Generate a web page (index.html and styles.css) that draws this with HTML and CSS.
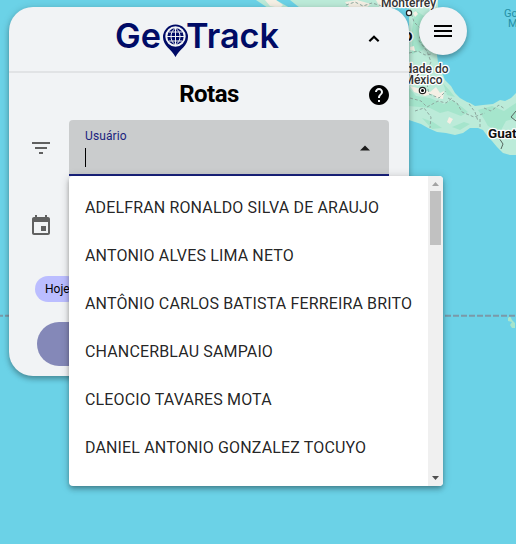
FILE: index.html
```html
<!DOCTYPE html>
<html lang="pt-BR">
<head>
<meta charset="utf-8">
<title>GeoTrack</title>
<link rel="stylesheet" href="styles.css">
</head>
<body>
<svg class="map" viewBox="0 0 516 544" width="516" height="544">
  <path fill="#bcebd9" d="M256 0 262 4 268 8H409V120L421 124 428 128 437 132 446 133 455 135 463 133 470 128 478 128 483 130 488 137 492 141 497 147 503 153 510 155H516V93L511 98 505 101 500 100 493 104 483 105 475 106 470 103 467 102 460 98 455 93 451 86 445 80 443 75 439 70 438 62 437 55 438 40V0Z"/>
  <path fill="#6bd2e7" d="M276 0 283 4 290 8H300L290 0Z"/>
  <path fill="#a5e5cc" d="M415 10 424 16 420 28 428 40 423 50 412 54V30ZM409 88 416 96 430 98 444 104 452 100 462 107 468 112 461 116 448 111 440 113 430 108 409 106ZM478 110 492 106 504 111 516 103V118L506 121 500 132 488 126 484 119ZM422 118 433 122 442 128 432 129ZM443 83 450 91 455 97 447 95ZM452 127 464 122 470 124 460 130Z"/>
  <path fill="#f5f0e5" d="M265 0H276L283 5 280 8 270 6ZM345 2 357 0 371 4 366 8H350ZM413 13 416 11 418 14 415 17ZM410 47 414 46 415 51 410 50ZM410 86 421 89 430 92 436 87 440 93 444 91 443 99 436 98 432 94 425 96 414 92ZM449 117 453 119 450 124 447 122ZM376 0 386 0 390 6 380 8Z"/>
  <g class="borders">
    <path d="M346 5 355 2 363 6 372 3 382 6M410 9 414 22 421 29 419 41 427 51 431 62 427 70M409 53 418 51 425 55 432 54M410 98 421 101 427 107 438 101 446 103 452 98M415 111 424 108 431 117 430 128M427 84 429 94 439 98 446 91M448 98 457 103 462 112 474 117 485 113M469 104 475 112 478 121M484 108 491 111 499 105 505 109M480 119 480 128"/>
    <path class="frontier" d="M516 111 511 117 516 121M499 138 503 144 501 149"/>
  </g>
  <path fill="#a5e5cc" d="M510 316 512 320 515 323V328H512L510 325 512 322 508 321 508 318Z"/>
  <path class="tropic" d="M-3 315.8H9M445 315.8H516"/>
  <circle class="city" cx="409" cy="13" r="2.6"/>
  <circle class="city" cx="422.500" cy="90.500" r="3.200"/>
  <circle cx="422.500" cy="90.500" r="1.500"/>
  <g class="map-labels">
    <text x="381" y="7">Monterrey</text>
    <text x="448.500" y="72.500" text-anchor="end">Cidade do</text>
    <text x="442.500" y="84.300" text-anchor="end">México</text>
    <text class="country" x="412.500" y="41" text-anchor="end">México</text>
    <text class="country guat" x="488" y="138">Guat</text>
    <g class="sea"><text x="504" y="17">Go</text><text x="508" y="27">M</text></g>
  </g>
</svg>

<main class="panel">
  <header class="brand">
    <svg class="logo" viewBox="0 0 166 44" width="166" height="44" role="img" aria-label="GeoTrack">
      <text x="0" y="33" textLength="46" lengthAdjust="spacingAndGlyphs">Ge</text>
      <path d="M60.500 9.500A12.500 12.500 0 0 0 48 22C48 31 56.500 34 60.500 42 64.500 34 73 31 73 22A12.500 12.500 0 0 0 60.500 9.500Z"/>
      <circle cx="60.500" cy="21.500" r="9.200" fill="none" stroke="#f1f3f5" stroke-width="2"/>
      <path fill="none" stroke="#f1f3f5" stroke-width="1" d="M60.500 13V30M52 21.500H69M54 17H67M54 26H67M60.500 13C54.500 17 54.500 26 60.500 30 66.500 26 66.500 17 60.500 13"/>
      <text x="71" y="33" textLength="93" lengthAdjust="spacingAndGlyphs">Track</text>
    </svg>
    <svg class="chevron" viewBox="0 0 24 24" width="24" height="24"><path d="M12 8.200 6.600 13.600 8.100 15.100 12 11.200 15.900 15.100 17.400 13.600Z"/></svg>
  </header>
  <div class="title-row">
    <h1>Rotas</h1>
    <svg class="help" viewBox="0 0 24 24" width="24" height="24"><path d="M12 2C6.480 2 2 6.480 2 12s4.480 10 10 10 10-4.480 10-10S17.520 2 12 2zm1 17h-2v-2h2v2zm2.070-7.750l-.9.920C13.450 12.900 13 13.500 13 15h-2v-.5c0-1.100.45-2.100 1.170-2.830l1.240-1.260c.37-.36.59-.86.59-1.410 0-1.100-.9-2-2-2s-2 .9-2 2H8c0-2.210 1.790-4 4-4s4 1.790 4 4c0 .88-.36 1.680-.93 2.250z"/></svg>
  </div>
  <div class="field-row">
    <svg class="row-icon" viewBox="0 0 24 24" width="24" height="24"><path d="M10 18h4v-2h-4v2zM3 6v2h18V6H3zm3 7h12v-2H6v2z"/></svg>
    <div class="select">
      <div class="select-text"><label>Usuário</label><span class="caret"></span></div>
      <svg viewBox="0 0 24 24" width="24" height="24"><path d="M7 14.500 12 9.500 17 14.500Z"/></svg>
    </div>
  </div>
  <div class="date-row">
    <svg class="row-icon" viewBox="0 0 24 24" width="24" height="24"><path d="M17 12h-5v5h5v-5zM16 1v2H8V1H6v2H5c-1.110 0-1.990.9-1.990 2L3 19c0 1.100.89 2 2 2h14c1.100 0 2-.9 2-2V5c0-1.100-.9-2-2-2h-1V1h-2zm3 18H5V8h14v11z"/></svg>
  </div>
  <div class="chips"><span class="chip">Hoje</span></div>
  <div class="submit"></div>
</main>

<div class="menu-button"><svg viewBox="0 0 24 24" width="24" height="24"><path d="M3 18h18v-2H3v2zm0-5h18v-2H3v2zm0-7v2h18V6H3z"/></svg></div>

<div class="dropdown">
  <ul class="options">
    <li>ADELFRAN RONALDO SILVA DE ARAUJO</li>
    <li>ANTONIO ALVES LIMA NETO</li>
    <li>ANTÔNIO CARLOS BATISTA FERREIRA BRITO</li>
    <li>CHANCERBLAU SAMPAIO</li>
    <li>CLEOCIO TAVARES MOTA</li>
    <li>DANIEL ANTONIO GONZALEZ TOCUYO</li>
  </ul>
  <div class="scrollbar">
    <svg viewBox="0 0 15 15" width="15" height="15"><path fill="#a3a3a3" d="M4 10 7.500 6 11 10Z"/></svg>
    <div class="thumb"></div>
    <svg class="down" viewBox="0 0 15 15" width="15" height="15"><path fill="#505050" d="M4 5 7.500 9 11 5Z"/></svg>
  </div>
</div>
</body>
</html>
```
FILE: styles.css
```css
* { box-sizing: border-box; }
body {
  margin: 0;
  width: 516px;
  height: 544px;
  overflow: hidden;
  position: relative;
  background: #6bd2e7;
  font-family: Roboto, sans-serif;
  color: #000;
}
svg { display: block; flex: none; }
.map { position: absolute; left: 0; top: 0; }
.borders path { fill: none; stroke: #8fa9a0; stroke-width: 1; stroke-dasharray: 3 2; }
.borders .frontier { stroke: #56665f; stroke-dasharray: none; }
.tropic { stroke: #7b99a8; stroke-width: 2; stroke-dasharray: 6 2; }
.city { fill: #fff; stroke: #222; stroke-width: 1.2; }
.map-labels text {
  font-size: 12px;
  font-weight: 500;
  fill: #333;
  stroke: #fff;
  stroke-width: 2.5px;
  paint-order: stroke;
  stroke-linejoin: round;
}
.map-labels .country { font-size: 17px; font-weight: 700; fill: #111; }
.map-labels .guat { font-size: 13.5px; }
.map-labels .sea text { font-size: 11px; font-weight: 400; fill: #238fa5; stroke: none; }

.panel {
  position: relative;
  margin: 7px 0 0 9px;
  width: 400px;
  height: 369px;
  display: inline-flex;
  flex-direction: column;
  background: #f1f3f5;
  border-radius: 24px;
  box-shadow: 0 3px 5px rgba(0,0,0,.25), 0 1px 9px rgba(0,0,0,.15);
}
.brand {
  display: flex;
  align-items: center;
  height: 66px;
  padding: 0 23px 0 106px;
  border-bottom: 2px solid #e1e3e5;
}
.logo { margin-bottom: 5px; }
.logo text { font: 600 34px Inter, sans-serif; fill: #000b66; }
.logo > path:first-of-type { fill: #000b66; }
.chevron { margin-left: auto; }
.title-row {
  display: grid;
  grid-template-columns: 24px 1fr 24px;
  align-items: center;
  height: 47px;
  padding: 0 18px;
}
.title-row h1 {
  grid-column: 2;
  margin: -5px 0 0;
  text-align: center;
  font-size: 24px;
  font-weight: 700;
  letter-spacing: -.5px;
}
.title-row .help { margin-top: -3px; }
.field-row { display: flex; align-items: center; gap: 16px; padding-left: 20px; }
.row-icon { fill: #606060; }
.select {
  display: flex;
  align-items: center;
  width: 320px;
  height: 56px;
  padding: 2px 12px 0 16px;
  background: #cacccd;
  border-bottom: 2px solid #1a237e;
  border-radius: 4px 4px 0 0;
}
.select-text { flex: 1; display: flex; flex-direction: column; gap: 5px; }
.select label { font-size: 12px; line-height: 14px; color: #1a237e; letter-spacing: .1px; }
.caret { width: 1px; height: 19px; background: #000; }
.select svg { fill: #1c1c1c; }
.date-row { padding: 38px 0 0 20px; }
.chips { padding: 38px 0 0 26px; display: flex; }
.chip {
  height: 26px;
  line-height: 26px;
  padding: 0 10px;
  border-radius: 13px;
  background: #bbbdff;
  font-size: 12px;
}
.submit {
  width: 344px;
  height: 44px;
  margin: 20px 0 0 28px;
  border-radius: 22px;
  background: #8488b8;
}
.menu-button {
  position: absolute;
  left: 419px;
  top: 7px;
  width: 48px;
  height: 48px;
  display: grid;
  place-items: center;
  border-radius: 50%;
  background: #f1f3f5;
  box-shadow: 0 3px 5px rgba(0,0,0,.25), 0 1px 9px rgba(0,0,0,.12);
}
.dropdown {
  position: absolute;
  left: 69px;
  top: 176px;
  width: 374px;
  height: 310px;
  display: flex;
  overflow: hidden;
  background: #fff;
  border-radius: 4px;
  box-shadow: 0 2px 4px -1px rgba(0,0,0,.2), 0 4px 5px rgba(0,0,0,.14), 0 1px 10px rgba(0,0,0,.2);
}
.options { flex: 1; margin: 0; padding: 8px 0 0 16px; list-style: none; }
.options li {
  height: 48px;
  line-height: 48px;
  font-size: 16px;
  letter-spacing: .144px;
  color: rgba(0,0,0,.87);
  white-space: nowrap;
}
.scrollbar { display: flex; flex-direction: column; align-items: center; width: 15px; background: #f0f0f0; }
.thumb { width: 11px; height: 54px; background: #c1c1c1; }
.scrollbar .down { margin-top: auto; }
```
